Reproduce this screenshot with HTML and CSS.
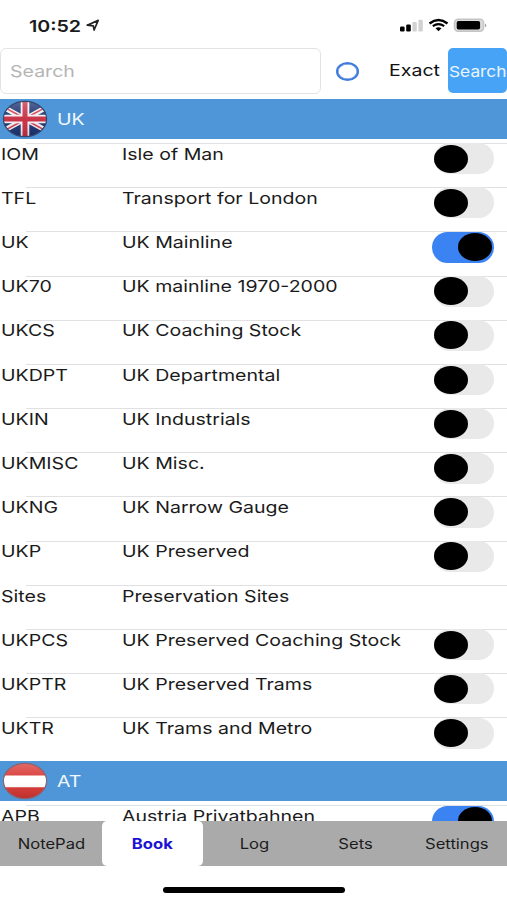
FILE: index.html
```
<!DOCTYPE html>
<html lang="en">
<head>
<meta charset="utf-8">
<title>Book</title>
<link rel="stylesheet" href="styles.css">
</head>
<body>
<div class="app">
  <header class="status">
    <span class="time wide">10:52</span>
    <svg class="loc" width="14" height="13" viewBox="0 0 14 13"><path d="M1.2 6.2 12.2 1.4 8.1 11 7.3 6.8Z" fill="none" stroke="#222" stroke-width="1.7" stroke-linejoin="round"/></svg>
    <svg class="signals" width="88" height="16" viewBox="0 0 88 16">
      <rect x="0" y="8.5" width="4.6" height="5" rx="1.2" fill="#000"/>
      <rect x="6.2" y="6.5" width="4.6" height="7" rx="1.2" fill="#000"/>
      <rect x="12.4" y="4" width="4.4" height="9.5" rx="1" fill="#d2d2d2"/>
      <rect x="18.4" y="1.8" width="4.4" height="11.7" rx="1" fill="#d2d2d2"/>
      <path d="M29.5 5.4Q38.5-1.4 47.5 5.4" fill="none" stroke="#000" stroke-width="2.5"/>
      <path d="M32.8 8.2Q38.5 4.2 44.2 8.2" fill="none" stroke="#000" stroke-width="2.2"/>
      <path d="M35.5 10.3Q38.5 8.4 41.5 10.3L38.5 13.2Z" fill="#000"/>
      <rect x="54.5" y="1.2" width="29" height="12" rx="3.6" fill="#ddd" stroke="#c4c4c4" stroke-width="1.6"/>
      <rect x="56.7" y="3" width="23.4" height="8.6" rx="1.8" fill="#000"/>
      <path d="M85 5.4Q87.6 7.3 85 9.2Z" fill="#999"/>
    </svg>
  </header>
  <section class="search">
    <div class="field"><span class="wide">Search</span></div>
    <span class="radio"></span>
    <span class="exact wide">Exact</span>
    <div class="button"><span class="wide">Search</span></div>
  </section>
  <main class="list" id="list">
    <div class="group">
      <svg class="flag" width="46" height="38" viewBox="0 0 46 38">
        <defs>
          <clipPath id="oval"><ellipse cx="23" cy="19" rx="21.5" ry="17.5"/></clipPath>
          <linearGradient id="shine" x1="0" y1="0" x2="0" y2="1"><stop offset="0" stop-color="#fff" stop-opacity=".28"/><stop offset=".5" stop-color="#fff" stop-opacity=".04"/><stop offset="1" stop-color="#000" stop-opacity=".14"/></linearGradient>
        </defs>
        <g clip-path="url(#oval)">
          <path d="M0 0H46V38H0Z" fill="#18306f"/>
          <path d="M0 6.5 46 31.5M0 31.5 46 6.5" stroke="#f4eef2" stroke-width="5.4"/>
          <path d="M0 6 23 18.5M46 32 23 19.5M0 32 23 19.5M46 6 23 18.5" stroke="#cf3c4c" stroke-width="1.6"/>
          <path d="M23 0V38M0 19H46" stroke="#f4eef2" stroke-width="8.6"/>
          <path d="M23 0V38M0 19H46" stroke="#c72c40" stroke-width="5"/>
          <path d="M0 0H46V38H0Z" fill="url(#shine)"/>
        </g>
        <ellipse cx="23" cy="19" rx="21.6" ry="17.6" fill="none" stroke="#34466d" stroke-width="1.2"/>
      </svg>
      <span class="wide">UK</span>
    </div>
    <div class="rows" id="uk"></div>
    <div class="group">
      <svg class="flag" width="46" height="38" viewBox="0 0 46 38">
        <g clip-path="url(#oval)">
          <path d="M0 0H46V38H0Z" fill="#d6332f"/>
          <path d="M0 13.5H46V25.3H0Z" fill="#fff"/>
          <path d="M0 0H46V38H0Z" fill="url(#shine)"/>
        </g>
        <ellipse cx="23" cy="19" rx="21.6" ry="17.6" fill="none" stroke="#8a6474" stroke-width="1.2"/>
      </svg>
      <span class="wide">AT</span>
    </div>
    <div class="rows" id="at"></div>
  </main>
  <nav class="tabs">
    <div class="tab"><span class="wide">NotePad</span></div>
    <div class="tab active"><span class="wide">Book</span></div>
    <div class="tab"><span class="wide">Log</span></div>
    <div class="tab"><span class="wide">Sets</span></div>
    <div class="tab"><span class="wide">Settings</span></div>
  </nav>
  <footer class="home"><span></span></footer>
</div>
<script src="app.js"></script>
</body>
</html>
```
FILE: styles.css
```
* { box-sizing: border-box; }
body { margin: 0; background: #fff; font-family: Inter, "Liberation Sans", sans-serif; font-size: 16.5px; color: #1b1b1b; }
.app { width: 507px; height: 900px; display: flex; flex-direction: column; overflow: hidden; }
.wide { display: inline-block; white-space: nowrap; transform: scaleX(1.185); transform-origin: left center; }
.status { height: 48px; flex: none; display: flex; align-items: flex-start; padding: 16px 0 0 29px; }
.time { font-weight: 600; font-size: 16.5px; line-height: 21px; width: 57px; transform: scaleX(1.19); }
.loc { margin-top: 3px; }
.signals { margin: 2px 0 0 300px; flex: none; }
.search { height: 51px; flex: none; display: flex; align-items: flex-start; }
.field { width: 321px; height: 46px; border: 1.5px solid #e3e3e3; border-radius: 6px; padding-left: 8.5px; line-height: 45px; color: #b5b5b5; }
.radio { width: 23px; height: 19px; margin: 13.5px 0 0 15px; border: 2.5px solid #3f7bdc; border-width: 2px; border-radius: 50%; box-shadow: inset 0 0 0 .5px #3f7bdc; }
.exact { margin: 0 0 0 30px; width: 59px; line-height: 45px; color: #111; }
.button { width: 59px; height: 45px; border-radius: 5px; background: #47a3f6; color: #eaf6ff; line-height: 47px; font-size: 15px; padding-left: 1px; }
.button .wide { transform: scaleX(1.155); }
.list { flex: none; height: 722px; overflow: hidden; }
.group { height: 40px; background: #4f96d8; display: flex; align-items: center; color: #f0f8ff; padding-left: 2px; }
.flag { margin-right: 9px; }
.rows { padding-top: 4px; }
.row { height: 44.18px; display: grid; grid-template-columns: 121px 310px 1fr; background: linear-gradient(#e1e1e3, #e1e1e3) 26px 0 / 100% 1px no-repeat; padding-left: 1px; }
.row .wide { justify-self: start; line-height: 21px; padding-top: .8px; }
.toggle { width: 62px; height: 31px; margin-top: .3px; border-radius: 16px; background: #3b82f3; padding: 1.5px 2px; display: flex; justify-content: flex-end; }
.toggle::after { content: ""; width: 34px; height: 28px; border-radius: 50%; background: #000; }
.toggle.off { background: #e9e9e9; justify-content: flex-start; width: 60px; margin-left: 2px; padding-left: 0; }
.tabs { flex: none; height: 45px; display: grid; grid-template-columns: 102px 101px 102px 101px 101px; background: #aaa; font-size: 14px; line-height: 45px; text-align: center; }
.tab .wide { transform-origin: center; }
.active { background: #fff; border-radius: 5px; color: #1c12d4; font-weight: 700; }
.home { display: flex; justify-content: center; padding-top: 21px; }
.home span { width: 182px; height: 5.5px; border-radius: 3px; background: #000; }
```
FILE: app.js
```
const books = {
  uk: [
    ["IOM", "Isle of Man", "off"],
    ["TFL", "Transport for London", "off"],
    ["UK", "UK Mainline", "on"],
    ["UK70", "UK mainline 1970-2000", "off"],
    ["UKCS", "UK Coaching Stock", "off"],
    ["UKDPT", "UK Departmental", "off"],
    ["UKIN", "UK Industrials", "off"],
    ["UKMISC", "UK Misc.", "off"],
    ["UKNG", "UK Narrow Gauge", "off"],
    ["UKP", "UK Preserved", "off"],
    ["Sites", "Preservation Sites", ""],
    ["UKPCS", "UK Preserved Coaching Stock", "off"],
    ["UKPTR", "UK Preserved Trams", "off"],
    ["UKTR", "UK Trams and Metro", "off"]
  ],
  at: [["APB", "Austria Privatbahnen", "on"]]
};
for (const [id, rows] of Object.entries(books)) {
  document.getElementById(id).innerHTML = rows.map(([code, name, state]) =>
    `<div class="row"><span class="wide">${code}</span><span class="wide">${name}</span>` +
    (state ? `<span class="toggle ${state}"></span>` : "") + "</div>").join("");
}
```
